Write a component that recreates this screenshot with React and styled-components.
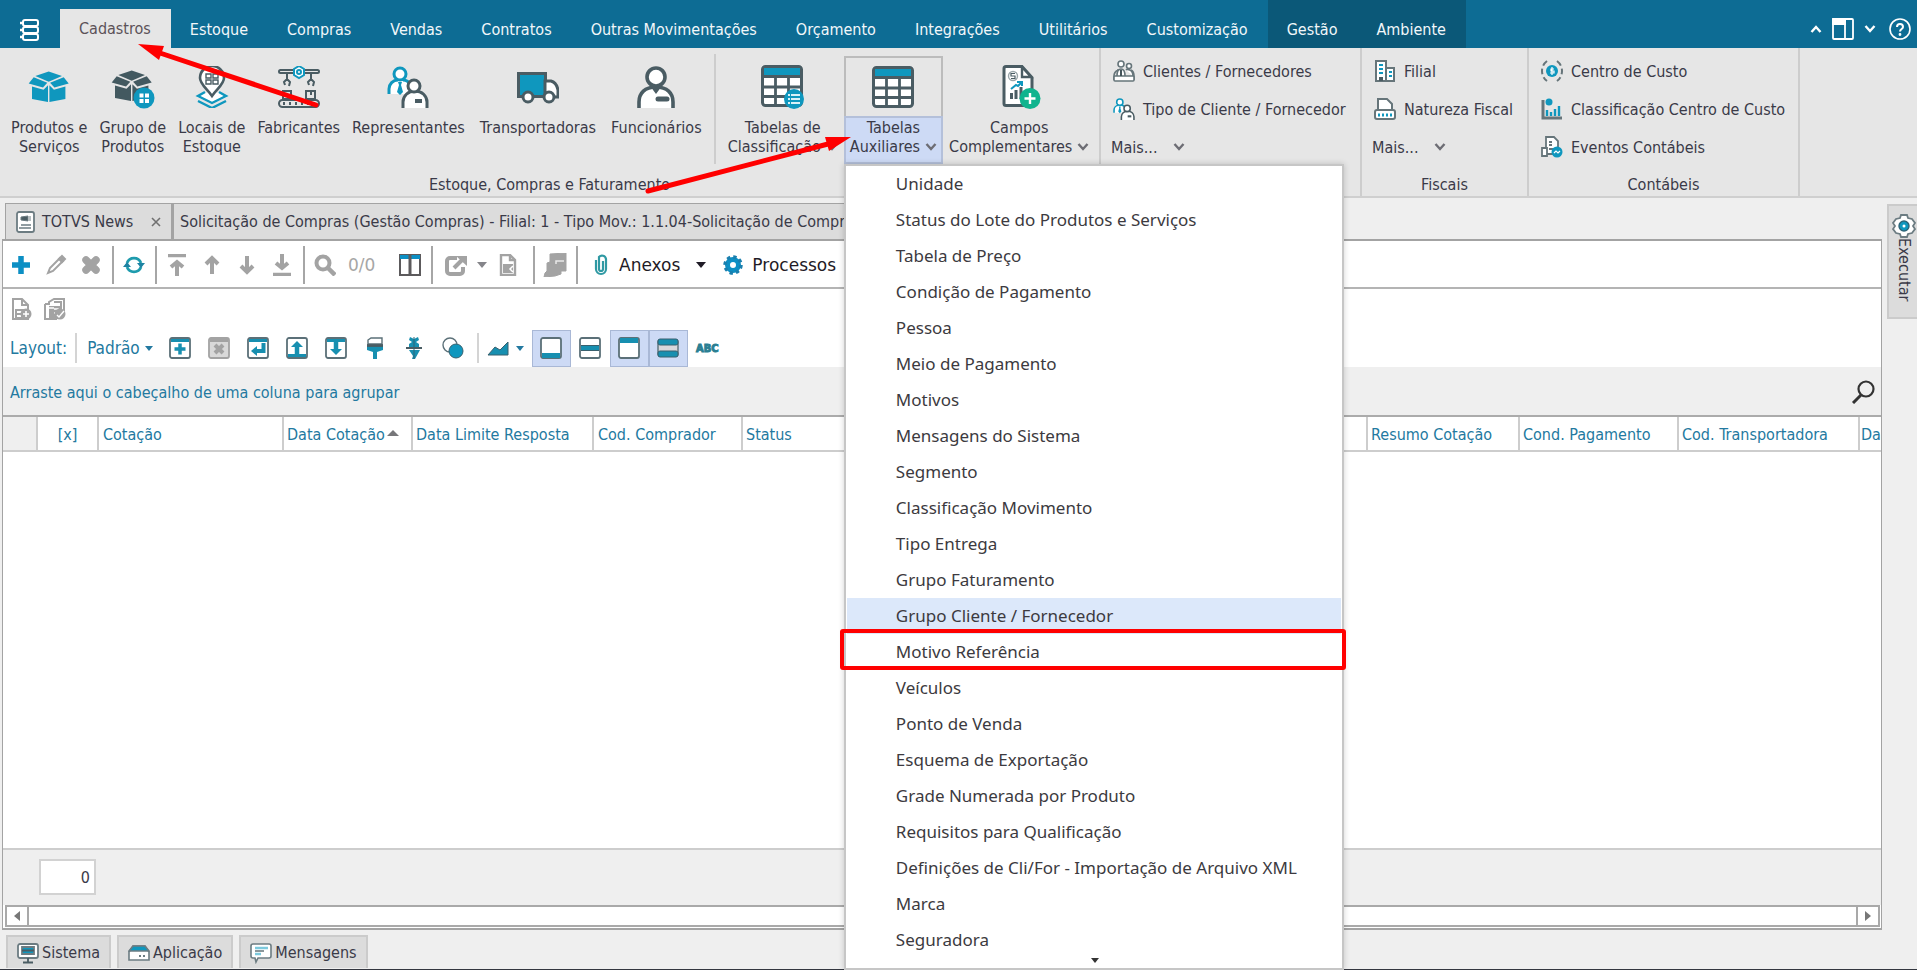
import React from 'react'
import styled, { createGlobalStyle, css } from 'styled-components'

const DARK = '#4a5c63'
const BLUE = '#0f97be'
const TEAL = '#178fb0'
const GREY = '#a3a3a3'

const GlobalStyle = createGlobalStyle`
  * { box-sizing: border-box; }

  body {
    margin: 0;
    overflow: hidden;
    background: #efefef;
    color: #3a3a48;
    font-family: 'DejaVu Sans Condensed', 'DejaVu Sans', sans-serif;
    font-size: 16px;
  }

  button, input, table {
    font: inherit;
    color: inherit;
  }

  button {
    margin: 0;
    padding: 0;
    border: 0;
    background: none;
    white-space: nowrap;
  }

  svg {
    display: block;
    flex: none;
  }
`

const Page = styled.div`
  position: relative;
  display: flex;
  flex-direction: column;
  height: 100vh;
  border-bottom: 1px solid #33363f;
`

/* ---------- header ---------- */

const Header = styled.header`
  display: flex;
  align-items: stretch;
  height: 48px;
  background: #0d6c94;
  color: #f2f7fa;
`

const AppButton = styled.button`
  display: flex;
  justify-content: center;
  align-items: center;
  width: 60px;
  padding-top: 12px;
`

const TabList = styled.nav`
  display: flex;
`

const MenuTab = styled.button`
  padding: 10px 20px 0 19px;
  ${({ $dark }) => $dark && css`
    background: #0b5878;
  `}
  ${({ $active }) => $active && css`
    margin-top: 9px;
    padding-top: 0;
    background: #e6e6e6;
    color: #5c5258;
  `}
`

const HeaderTools = styled.div`
  display: flex;
  align-items: center;
  gap: 6px;
  margin-left: auto;
  padding-top: 9px;
`

/* ---------- ribbon ---------- */

const Ribbon = styled.section`
  display: flex;
  height: 150px;
  background: #e6e6e6;
  border-bottom: 2px solid #cfcfcf;
`

const Group = styled.div`
  display: flex;
  flex-direction: column;
  width: ${({ $width }) => $width}px;
  border-right: 2px solid #cdcdcd;
`

const GroupBody = styled.div`
  display: flex;
  height: 116px;
  padding: 8px 0 0 5px;
`

const GroupLabel = styled.div`
  padding-top: 11px;
  line-height: 20px;
  text-align: center;
`

const Divider = styled.div`
  width: 2px;
  height: 110px;
  margin: -2px 6px 0;
  background: #cdcdcd;
`

const BigItem = styled.div`
  position: relative;
  margin-right: ${({ $after }) => $after || 0}px;
`

const BigButton = styled.button`
  display: block;
  height: 108px;
  ${({ $open }) => $open && css`
    box-shadow: inset 0 0 0 2px #bcbcbc;
  `}
`

const BigIcon = styled.span`
  display: flex;
  align-items: center;
  justify-content: center;
  height: 60px;
  padding-top: 2px;
`

const BigLabel = styled.span`
  display: block;
  height: 48px;
  padding: 2px 6px;
  line-height: 19px;
  text-align: center;
  ${({ $open }) => $open && css`
    background: #cddaf5;
    box-shadow: inset 0 0 0 2px #b4c0da;
  `}
`

const LabelLine = styled.span`
  display: flex;
  align-items: center;
  justify-content: center;
  gap: 5px;
`

const SmallList = styled.div`
  display: flex;
  flex: none;
  flex-direction: column;
  height: 116px;
  padding: 4px 0 0 10px;
`

const SmallButton = styled.button`
  display: flex;
  flex: none;
  align-items: center;
  gap: 8px;
  height: 38px;
  padding-left: 2px;
`

const MoreButton = styled(SmallButton)`
  gap: 16px;
  padding-left: 0;
`

/* ---------- drop-down menu ---------- */

const Menu = styled.div`
  position: absolute;
  z-index: 5;
  top: 108px;
  left: 0;
  width: 500px;
  height: 806px;
  padding: 0 1px;
  border: 2px solid #c6c6c6;
  background: #fff;
  box-shadow: 0 0 6px rgba(0, 0, 0, 0.18);
`

const MenuItem = styled.button`
  position: relative;
  display: block;
  width: 100%;
  height: 36px;
  padding-left: 49px;
  font-family: 'Noto Sans', sans-serif;
  font-size: 17px;
  line-height: 36px;
  text-align: left;
  color: #3c3a40;
  background: ${({ $hover }) => ($hover ? '#dce8fa' : 'none')};
  ${({ $marked }) => $marked && css`
    &::after {
      content: '';
      position: absolute;
      inset: -5px -5px 0 -7px;
      border: 4px solid #ff0000;
      border-radius: 3px;
    }
  `}
`

const MenuMore = styled.div`
  display: flex;
  justify-content: center;
  padding-left: 2px;
`

/* ---------- workspace ---------- */

const Workspace = styled.div`
  display: flex;
  flex: 1;
  gap: 5px;
  min-height: 0;
  padding: 5px 0 0 2px;
`

const Main = styled.main`
  display: flex;
  flex: 1;
  flex-direction: column;
  min-width: 0;
`

const DocTabs = styled.div`
  display: flex;
  height: 36px;
  padding-left: 3px;
`

const DocTab = styled.button`
  display: flex;
  align-items: center;
  width: ${({ $width }) => $width}px;
  padding: 0 10px 0 ${({ $pad }) => $pad}px;
  border: solid #a3a3a3;
  border-width: 1px 2px 0 1px;
  background: #dcdcdc;

  & > :last-child:not(:first-child) {
    margin-left: auto;
  }
`

const DocTitle = styled.span`
  margin-left: 6px;
`

const Panel = styled.section`
  display: flex;
  flex: 1;
  flex-direction: column;
  min-height: 0;
  border: solid #a3a3a3;
  border-width: 2px 1px 2px 1px;
  background: #fff;
`

const Toolbar = styled.div`
  display: flex;
  align-items: center;
  height: 48px;
  padding-top: 2px;
  border-bottom: 2px solid #b4b4b4;
  color: #1f1b26;
  font-family: 'DejaVu Sans', sans-serif;
  font-size: 17px;
`

const ActionBar = styled.div`
  display: flex;
  align-items: center;
  gap: 12px;
  height: 40px;
  padding-left: 7px;
`

const LayoutBar = styled.div`
  display: flex;
  align-items: center;
  height: 38px;
  padding-left: 7px;
  color: #2379a0;
  font-size: 17px;
`

const ToolButton = styled.button`
  display: flex;
  align-items: center;
  justify-content: center;
  width: ${({ $width }) => $width || 35}px;
  height: 38px;
`

const TextButton = styled.button`
  display: flex;
  align-items: center;
  gap: ${({ $gap }) => $gap || 10}px;
  padding-left: ${({ $left }) => $left || 0}px;
`

const Counter = styled.span`
  width: 50px;
  padding-left: 6px;
  color: #a6a6a6;
`

const Rule = styled.span`
  width: 2px;
  height: ${({ $light }) => ($light ? 30 : 38)}px;
  margin: 0 2px 0 4px;
  background: ${({ $light }) => ($light ? '#d4d4d4' : '#a6a6a6')};
`

const LayoutRule = styled(Rule)`
  margin: 0 10px 0 8px;
`

const Spacer = styled.span`
  width: 8px;
`

const LayoutTool = styled.button`
  display: flex;
  align-items: center;
  justify-content: center;
  width: 39px;
  height: 37px;
  ${({ $on }) => $on && css`
    border: 1px solid #a9b8d6;
    background: #cddaf5;
  `}
`

const GroupBar = styled.div`
  display: flex;
  align-items: center;
  justify-content: space-between;
  height: 50px;
  padding: 2px 6px 0 7px;
  background: #efefef;
  border-bottom: 2px solid #ababab;
  color: #2379a0;
`

const Grid = styled.table`
  width: 100%;
  border-collapse: collapse;
  table-layout: fixed;
  color: #2379a0;
`

const Th = styled.th`
  width: ${({ $width }) => ($width ? `${$width}px` : 'auto')};
  height: 34px;
  padding: 2px 0 0 ${({ $left }) => $left ?? 4}px;
  overflow: hidden;
  border-right: 2px solid #cdcdcd;
  border-bottom: 2px solid #cdcdcd;
  background: ${({ $blank }) => ($blank ? '#efefef' : '#fff')};
  font-weight: normal;
  text-align: ${({ $center }) => ($center ? 'center' : 'left')};
  white-space: nowrap;

  svg {
    display: inline-block;
    margin-left: 2px;
    vertical-align: 4px;
  }

  &:last-child {
    border-right: 0;
  }
`

const GridSpace = styled.div`
  flex: 1;
`

const GridFooter = styled.div`
  height: 57px;
  padding: 9px 0 0 36px;
  border-top: 2px solid #cdcdcd;
  background: #efefef;
`

const TotalBox = styled.input`
  display: block;
  width: 57px;
  height: 36px;
  padding: 0 4px 0 0;
  border: 2px solid #d2d2d2;
  background: #fff;
  text-align: right;
`

const ScrollBar = styled.div`
  display: flex;
  justify-content: space-between;
  height: 22px;
  margin: 0 1px 1px 2px;
  border: 2px solid #a9a9a9;
  background: #fff;
`

const ScrollButton = styled.button`
  display: flex;
  align-items: center;
  justify-content: center;
  width: 22px;
  border: solid #a9a9a9;
  border-width: ${({ $end }) => ($end ? '0 0 0 2px' : '0 2px 0 0')};
`

const SideTab = styled.button`
  display: flex;
  flex-direction: column;
  align-items: center;
  width: 30px;
  height: 115px;
  margin-top: 1px;
  padding: 8px 0 0 1px;
  border: 2px solid #cbcbcb;
  border-right: 0;
  background: #dcdcdc;

  span {
    writing-mode: vertical-rl;
    line-height: 22px;
  }
`

const StatusTabs = styled.footer`
  display: flex;
  gap: 6px;
  padding: 5px 0 1px 6px;
`

const StatusTab = styled.button`
  display: flex;
  align-items: center;
  gap: 3px;
  height: 33px;
  padding: 0 9px;
  border: 2px solid #cbcbcb;
  border-bottom: 0;
  background: #dcdcdc;
`

const Annotations = styled.svg`
  position: absolute;
  z-index: 10;
  top: 0;
  left: 0;
  pointer-events: none;
`

/* ---------- icons ---------- */

const Icon = ({ size = 22, box = 22, children, ...rest }) => (
  <svg width={size} height={size} viewBox={`0 0 ${box} ${box}`} fill='none' aria-hidden='true' {...rest}>
    {children}
  </svg>
)

const Chevron = ({ up, color = '#6d6d74' }) => (
  <svg width='12' height='8' viewBox='0 0 12 8' fill='none' stroke={color} strokeWidth='2.400' aria-hidden='true'>
    <path d={up ? 'M1.500 7L6 2l4.500 5' : 'M1.500 1L6 6l4.500-5'} />
  </svg>
)

const Caret = ({ color = '#1f1b26', size = 10 }) => (
  <svg width={size} height={size / 2 + 1} viewBox='0 0 10 6' fill={color} aria-hidden='true'>
    <path d='M0 0h10l-5 6z' />
  </svg>
)

const OpenBox = ({ color }) => (
  <g fill={color}>
    <path d='M20.700 5.500L34 10l-13.300 5.700L7.300 10z' />
    <path d='M5.700 11.300l13.600 5.400-4.300 4.800-14.300-4z' />
    <path d='M35.700 11.300l-13.600 5.400 4.300 4.800 14.300-4z' />
    <path d='M4 20.500l11.500 3.300 4.500-4.600V36L4 33z' />
    <path d='M37.400 20.500l-11.500 3.300-4.500-4.600V36l16-3z' />
  </g>
)

const ProductsIcon = () => <Icon size={42} box={42}><OpenBox color={BLUE} /></Icon>

const ProductGroupIcon = () => (
  <Icon size={44} box={44}>
    <OpenBox color='#435960' />
    <circle cx='33' cy='33' r='10.500' fill={BLUE} />
    <path d='M28.500 28.500h4v4h-4zM34 28.500h4v4h-4zM28.500 34h4v4h-4zM34 34h4v4h-4z' fill='#fff' />
  </Icon>
)

const StockPlaceIcon = () => (
  <Icon size={42} box={42}>
    <path d='M6 31l15-7 15 7-15 7z' fill='#fff' />
    <path d='M14 26l-7 4 14 7 14-7-7-4M7 35l14 7 14-7' stroke={BLUE} strokeWidth='2.400' />
    <path d='M21 30C16 23 9 18 9 12a12 12 0 0 1 24 0c0 6-7 11-12 18z' fill='#fff' stroke={DARK} strokeWidth='2.600' />
    <path d='M15 8h5v4h-5zM22 8h5v4h-5zM15 14h5v4h-5zM22 14h5v4h-5z' stroke={DARK} strokeWidth='1.400' />
  </Icon>
)

const FactoryIcon = () => (
  <Icon size={42} box={42} stroke={DARK} strokeWidth='2'>
    <rect x='1' y='4' width='40' height='3' rx='1.500' />
    <path d='M21 0l5 3v6l-5 3-5-3V3z' fill='#fff' stroke={BLUE} />
    <circle cx='21' cy='6' r='2' stroke={BLUE} />
    <path d='M9 7v6M33 7v6M7 19l-1-3 3-3 3 3-1 4M31 19l-1-3 3-3 3 3-1 4' />
    <path d='M5 25h8v8H5zM28 25h9v8h-9zM33 25v4' />
    <rect x='1' y='34' width='40' height='7' rx='3.500' />
    <path d='M5 37.500h2M11 37.500h2M17 37.500h2M23 37.500h2M29 37.500h2M35 37.500h2' strokeWidth='3' />
  </Icon>
)

const RepresentativesIcon = ({ size = 42 }) => (
  <Icon size={size} box={42} strokeWidth='3'>
    <path d='M2 28v-5c0-5 5-9 11-9s10 3 11 8v6z' fill='#fff' />
    <path d='M2 28v-5c0-5 4-9 9-9M16 14c3 0 6 2 7 5' stroke={BLUE} />
    <circle cx='13' cy='8' r='6' fill='#fff' stroke={BLUE} />
    <path d='M11 16h4l-1 3 2 7-3 3-3-3 2-7z' fill={BLUE} />
    <path d='M16 42v-6c0-6 5-11 12-11s12 5 12 11v6' fill='#fff' stroke={DARK} />
    <circle cx='27' cy='20' r='6' fill='#fff' stroke={DARK} />
    <path d='M28 35h7' stroke={DARK} strokeWidth='4' />
  </Icon>
)

const TruckIcon = () => (
  <Icon size={42} box={42}>
    <path d='M1.500 7.500h27v23h-27z' fill={BLUE} stroke={DARK} strokeWidth='3' />
    <path d='M28 15h6c4 1 6 4 7 9v7H28z' fill='#fff' stroke={DARK} strokeWidth='3' />
    <circle cx='11' cy='31' r='5' fill='#fff' stroke={DARK} strokeWidth='3' />
    <circle cx='32' cy='31' r='5' fill='#fff' stroke={DARK} strokeWidth='3' />
  </Icon>
)

const EmployeeIcon = () => (
  <Icon size={42} box={42} stroke={DARK} strokeWidth='3.600'>
    <path d='M4 42v-6c0-9 6-15 17-15s17 6 17 15v6' fill='#fff' />
    <circle cx='21' cy='11' r='9' fill='#fff' />
    <path d='M18 21l3 4 3-4' fill={DARK} />
    <path d='M23 33h9' strokeWidth='5' strokeLinecap='round' />
  </Icon>
)

const TableShape = () => (
  <>
    <rect x='1.500' y='1.500' width='39' height='39' rx='3' fill='#fff' stroke={DARK} strokeWidth='3' />
    <path d='M3 3h36v8H3z' fill={BLUE} />
    <path d='M2 11.500h38M2 22h38M2 31.500h38M14.500 12v28M27.500 12v28' stroke={DARK} strokeWidth='2.800' />
  </>
)

const TableIcon = () => <Icon size={42} box={42}><TableShape /></Icon>

const TableClassIcon = () => (
  <Icon size={44} box={44}>
    <TableShape />
    <circle cx='33' cy='34' r='10' fill={BLUE} />
    <path d='M27 30h2M27 34h2M27 38h2M30 30h9M30 34h9M30 38h9' stroke='#d8f1f8' strokeWidth='2' />
  </Icon>
)

const FieldsIcon = () => (
  <Icon size={44} box={44}>
    <path d='M9 1.500h16l10 11v28H9a2 2 0 0 1-2-2v-35a2 2 0 0 1 2-2z' fill='#fff' stroke={DARK} strokeWidth='3' />
    <path d='M25 2v10h9z' fill='#fff' stroke={DARK} strokeWidth='2.400' />
    <circle cx='16' cy='11' r='4.500' stroke='#9aa6aa' strokeWidth='1.400' />
    <path d='M18 8.500h-4v2.500h4v2.500h-4' stroke={DARK} strokeWidth='1.200' />
    <path d='M14 24l5-4 2 1 4-4M20 17h5v4' stroke={BLUE} strokeWidth='2' />
    <path d='M14.500 28v6M19 25v9M24 22v12' stroke={DARK} strokeWidth='3' />
    <circle cx='33' cy='33.500' r='10.500' fill='#0fb48e' />
    <path d='M33 28v11M27.500 33.500h11' stroke='#fff' strokeWidth='2.400' />
  </Icon>
)

const ClientsIcon = () => (
  <Icon stroke='#66757a' strokeWidth='1.600'>
    <path d='M1 20v-4c0-3 2-5 4-6v-1M21 20v-4c0-3-1-5-3-6' />
    <path d='M4 16c0-4 1-7 4-7s4 3 4 7M13 10c1-1 7-1 7 6' fill='#fff' />
    <circle cx='8' cy='4' r='3' fill='#fff' />
    <circle cx='16' cy='6' r='2.500' fill='#fff' />
    <rect x='1' y='16' width='20' height='5' rx='1' fill='#fff' />
    <path d='M8 10v6' stroke='#44545a' strokeWidth='2' />
  </Icon>
)

const BranchIcon = () => (
  <Icon stroke='#66757a' strokeWidth='2'>
    <path d='M2 1h10v20H2zM12 8h8v13h-8z' fill='#fff' />
    <path d='M5 5h4M5 9h4M5 13h4M15 12h3M15 16h3' stroke={BLUE} />
    <path d='M5 17h4v4H5z' fill={DARK} stroke='none' />
  </Icon>
)

const FiscalIcon = () => (
  <Icon stroke='#66757a' strokeWidth='2'>
    <path d='M4 12V1h9l5 5v6' fill='#fff' />
    <rect x='1' y='12' width='20' height='9' rx='2' fill='#fff' />
    <path d='M4 17h2M8 17h2M12 17h2M16 17h2' stroke={BLUE} strokeWidth='3' />
  </Icon>
)

const CostCenterIcon = () => (
  <Icon>
    <path d='M6 1C2 4 1 8 1 11s1 7 5 10M16 1c4 3 5 7 5 10s-1 7-5 10' stroke='#66757a' strokeWidth='2' strokeDasharray='6 3' />
    <circle cx='11' cy='11' r='6' fill={BLUE} />
    <path d='M13 9h-3v2h3v2H9M11 7v8' stroke='#fff' strokeWidth='1.200' />
  </Icon>
)

const CostClassIcon = () => (
  <Icon>
    <path d='M2 2v18h19' stroke='#66757a' strokeWidth='3' />
    <circle cx='8' cy='4' r='3.500' fill={BLUE} />
    <path d='M6 18v-6M10 18v-4M14 18V11M18 18V8' stroke={BLUE} strokeWidth='2.400' />
  </Icon>
)

const EventsIcon = () => (
  <Icon stroke='#66757a' strokeWidth='1.800'>
    <path d='M5 1h8l4 4v13H5z' fill='#fff' />
    <path d='M1 12h5v8H1z' fill='#fff' />
    <path d='M8 6h3M8 9h3M8 13h6' />
    <circle cx='16' cy='16' r='5.500' fill={BLUE} stroke='none' />
    <path d='M13 17l2-2 2 2 2-2' stroke='#fff' strokeWidth='1.200' />
  </Icon>
)

const StackIcon = () => (
  <Icon stroke='#fff' strokeWidth='2'>
    <rect x='4' y='1' width='15' height='6' rx='2' />
    <rect x='4' y='8' width='15' height='6' rx='2' />
    <rect x='4' y='15' width='15' height='6' rx='2' />
    <path d='M1 4h4M1 11h4M1 18h4' strokeWidth='2.400' />
  </Icon>
)

const PaneIcon = () => (
  <Icon stroke='#fff' strokeWidth='1.800'>
    <rect x='1' y='1' width='20' height='20' rx='1' />
    <path d='M13 1v20' />
    <path d='M1 1h12v5H1z' fill='#fff' />
  </Icon>
)

const HelpIcon = () => (
  <Icon stroke='#fff' strokeWidth='1.600'>
    <circle cx='11' cy='11' r='10' />
    <path d='M8 9c0-4 6-4 6 0 0 2-3 2-3 4.500' strokeWidth='2' />
    <circle cx='11' cy='16.500' r='.6' fill='#fff' />
  </Icon>
)

const NewsIcon = () => (
  <Icon stroke='#6c7c82' strokeWidth='1.800'>
    <rect x='3' y='1' width='17' height='20' rx='2' fill='#fff' />
    <path d='M7 6l7-1v5l-7-1zM16 5v5' fill={DARK} strokeWidth='1' />
    <path d='M7 14h10M5 17h12' strokeWidth='1.600' />
  </Icon>
)

const PlusIcon = () => <Icon><path d='M11 2v18M2 11h18' stroke='#0c8fc4' strokeWidth='5.500' /></Icon>

const PencilIcon = () => (
  <Icon stroke={GREY} strokeWidth='2'>
    <path d='M3 19l2-5L15 4l3 3L8 17z' />
    <path d='M14 5l3-3 3 3-3 3z' fill={GREY} />
  </Icon>
)

const CrossIcon = () => (
  <Icon>
    <path d='M6 6l10 10M16 6L6 16' stroke={GREY} strokeWidth='7.500' strokeLinecap='round' />
  </Icon>
)

const RefreshIcon = () => (
  <Icon stroke='#1e9bad' strokeWidth='2.800'>
    <path d='M4 9a7.500 7.500 0 0 1 14 0M18 13a7.500 7.500 0 0 1-14 0' />
    <path d='M14 9h8l-4 5zM8 13H0l4-5z' fill='#1d82a2' stroke='none' />
  </Icon>
)

const ArrowIcon = ({ down, bar }) => (
  <Icon stroke={GREY} strokeWidth='4'>
    <g transform={down ? 'rotate(180 11 11)' : undefined}>
      {bar && <path d='M2 1.500h18' strokeWidth='3.500' />}
      <path d={bar ? 'M11 22V9M5 13l6-5 6 5' : 'M11 20V5M5 10l6-6 6 6'} />
    </g>
  </Icon>
)

const FindIcon = () => (
  <Icon stroke={GREY}>
    <circle cx='9' cy='9' r='6.500' strokeWidth='4' />
    <path d='M14 14l7 7' strokeWidth='4.500' />
  </Icon>
)

const ColumnsIcon = () => (
  <Icon stroke='#5c5a5c' strokeWidth='2'>
    <path d='M1 1h20v20H1z' />
    <path d='M1 3h20' stroke='#0c8fc4' strokeWidth='4' />
    <path d='M11 1v20' strokeWidth='3' />
  </Icon>
)

const ExportIcon = () => (
  <Icon stroke={GREY}>
    <path d='M12 4H5a3 3 0 0 0-3 3v10a3 3 0 0 0 3 3h10a3 3 0 0 0 3-3v-4' strokeWidth='4' />
    <path d='M9 14l9-9' strokeWidth='4' />
    <path d='M11 2h11v10z' fill={GREY} stroke='none' />
  </Icon>
)

const ReportIcon = () => (
  <Icon stroke={GREY} strokeWidth='2.400'>
    <path d='M4 1h9l5 5v15H4z' />
    <path d='M6 10h10v9H6z' fill={GREY} stroke='none' />
    <path d='M16 12l-3 3 3 3' stroke='#fff' strokeWidth='1.500' />
    <path d='M13 1v5h5' />
  </Icon>
)

const StampIcon = () => (
  <Icon size={24} box={24}>
    <path d='M7 1l16-1v18h-5v3l-6 2-11 1 1-4 2-2V10l3-1z' fill={GREY} stroke={GREY} />
    <path d='M13 11V8h8' stroke='#e9e9e9' strokeWidth='1.500' />
  </Icon>
)

const ClipIcon = () => (
  <Icon stroke='#2f99a3' strokeWidth='2.200'>
    <path d='M6 6v9a5 5 0 0 0 10 0V5a4 4 0 0 0-7-2v12a2 2 0 0 0 4 0V7' />
  </Icon>
)

const GearIcon = () => (
  <Icon>
    <circle cx='11' cy='11' r='5.500' stroke='#0c8fc4' strokeWidth='5' />
    <circle cx='11' cy='11' r='8' stroke='#1a7fae' strokeWidth='3.500' strokeDasharray='3.280 3' />
  </Icon>
)

const RunGearIcon = () => (
  <Icon size={24} box={24}>
    <path d='M9 1h6l1 3 4 1 3 4-2 3 2 3-3 4-4 1-1 3H9l-1-3-4-1-3-4 2-3-2-3 3-4 4-1z' fill='#fff' stroke='#6c7c82' strokeWidth='1.800' />
    <circle cx='12' cy='12' r='5' fill={BLUE} stroke='#2c6478' strokeWidth='1.400' />
    <circle cx='12' cy='12' r='1.500' fill='#fff' />
  </Icon>
)

const AddRecordIcon = () => (
  <Icon stroke={GREY} strokeWidth='2'>
    <path d='M3 1h9l6 6v14H3zM12 1v6h6' />
    <path d='M6 12h7v8H6z' fill={GREY} />
    <path d='M7 14h5M7 18h4' stroke='#fff' />
    <circle cx='16' cy='16' r='5.500' fill={GREY} stroke='none' />
    <path d='M16 13v6M13 16h6' stroke='#fff' strokeWidth='1.600' />
  </Icon>
)

const RecordsIcon = () => (
  <Icon stroke={GREY} strokeWidth='2'>
    <path d='M1 6h4V4l5-3h10v13M1 6v15h12M10 4h7v8' />
    <path d='M6 9h9v11H6z' fill={GREY} />
    <path d='M4 10h6M10 11h4v4h-4' stroke='#fff' strokeWidth='1.400' />
    <circle cx='16' cy='16' r='5.500' fill={GREY} stroke='none' />
    <path d='M13 17l2 2 5-6' stroke='#fff' strokeWidth='1.400' />
  </Icon>
)

const FrameIcon = ({ color = '#5b7078', fill = '#fff', top, bottom, children }) => (
  <Icon>
    <rect x='1' y='1' width='20' height='20' rx='2' fill={fill} stroke={color} strokeWidth='1.800' />
    {top && <path d='M2 3.500h18' stroke={color === GREY ? GREY : TEAL} strokeWidth={top} />}
    {bottom && <path d='M2 18.500h18' stroke={TEAL} strokeWidth={bottom} />}
    {children}
  </Icon>
)

const LayoutIcon = ({ name }) => {
  switch (name) {
    case 'new':
      return <FrameIcon top='3'><path d='M11 6.500v11M5.500 12h11' stroke={TEAL} strokeWidth='3.500' /></FrameIcon>
    case 'delete':
      return <FrameIcon top='3' color={GREY} fill='#d9d9d9'><path d='M7 8l8 8M15 8l-8 8' stroke={GREY} strokeWidth='4' /></FrameIcon>
    case 'restore':
      return <FrameIcon top='3'><path d='M16.500 6v8H10' stroke={TEAL} strokeWidth='4' /><path d='M10 9v10l-6-5z' fill={TEAL} /></FrameIcon>
    case 'export':
      return <FrameIcon bottom='3'><path d='M11 17V8' stroke={TEAL} strokeWidth='4.500' /><path d='M5 10h12l-6-6z' fill={TEAL} /></FrameIcon>
    case 'import':
      return <FrameIcon top='3'><path d='M11 5v9' stroke={TEAL} strokeWidth='4.500' /><path d='M5 12h12l-6 6z' fill={TEAL} /></FrameIcon>
    case 'brush':
      return (
        <Icon>
          <path d='M4 7V3l3-2h11v6z' fill='#fff' stroke='#5b7078' strokeWidth='1.400' />
          <path d='M3 8h16v5l-6 2v7H9v-7l-6-2z' fill={TEAL} />
          <path d='M3 8.500h16' stroke='#4a5c63' strokeWidth='2.800' />
        </Icon>
      )
    case 'sort':
      return (
        <Icon>
          <path d='M7 0l4 2 4-2 1 3-3 2 3 2v3H6V7l3-2-3-2zM6 13h11l-5 9H9l1-3z' fill={TEAL} />
          <path d='M3 11h16' stroke='#4a5c63' strokeWidth='2' />
          <path d='M11 0v22' stroke='#2c6478' strokeWidth='1' />
        </Icon>
      )
    case 'circles':
      return (
        <Icon>
          <circle cx='8' cy='8' r='7' fill='#fff' stroke='#5b7078' strokeWidth='1.400' />
          <circle cx='14' cy='14' r='7' fill={BLUE} stroke='#38606e' strokeWidth='1' />
        </Icon>
      )
    case 'chart':
      return <Icon><path d='M1 18l7-8 5 3 8-8v13z' fill={TEAL} stroke='#38606e' /></Icon>
    case 'footer':
      return <FrameIcon bottom='5' />
    case 'row':
      return <FrameIcon><path d='M2 11h18' stroke={TEAL} strokeWidth='4' /><path d='M2 8.500h18M2 13.500h18' stroke='#38606e' /></FrameIcon>
    case 'header':
      return <FrameIcon top='5' />
    case 'rows':
      return (
        <Icon>
          <rect x='1' y='3' width='20' height='16' rx='2' fill='#d8d8dc' stroke='#5b7078' strokeWidth='1.400' />
          <rect x='1' y='2' width='20' height='6' rx='2' fill={TEAL} stroke='#38606e' />
          <rect x='1' y='14' width='20' height='6' rx='2' fill={TEAL} stroke='#38606e' />
        </Icon>
      )
    default:
      return null
  }
}

const Abc = styled.span`
  color: #2a7f93;
  font-size: 11px;
  font-weight: 700;
  -webkit-text-stroke: 1px #2a7f93;
`

const GridSearchIcon = () => (
  <Icon size={24} box={24} stroke='#333'>
    <circle cx='15' cy='9' r='7.500' strokeWidth='2.200' />
    <path d='M10 15l-8 8' strokeWidth='3' />
  </Icon>
)

const MonitorIcon = () => (
  <Icon stroke='#6c7c82' strokeWidth='1.800'>
    <rect x='1' y='2' width='20' height='14' rx='2' fill='#fff' />
    <path d='M5 5h12v7H5z' fill={BLUE} />
    <path d='M5 8.500h12M11 16v4M6 20.500h10' stroke={DARK} />
  </Icon>
)

const ServerIcon = () => (
  <Icon stroke='#6c7c82' strokeWidth='1.600'>
    <path d='M5 4h12l4 6v8H1v-8z' fill='#fff' />
    <path d='M5 4h12l4 5H1z' fill={BLUE} />
    <path d='M11 14h2M15 14h2' strokeWidth='2' />
  </Icon>
)

const MessageIcon = () => (
  <Icon stroke='#6c7c82' strokeWidth='1.600'>
    <path d='M3 2h16a2 2 0 0 1 2 2v10a2 2 0 0 1-2 2H8l-2 4-1-4H3a2 2 0 0 1-2-2V4a2 2 0 0 1 2-2z' fill='#fff' />
    <path d='M5 6h13M5 12h6' stroke='#7cc9dd' strokeWidth='2.400' />
    <path d='M5 9h9' stroke='#8a979b' strokeWidth='2' />
  </Icon>
)

/* ---------- data ---------- */

const menuTabs = [
  'Cadastros', 'Estoque', 'Compras', 'Vendas', 'Contratos', 'Outras Movimentações',
  'Orçamento', 'Integrações', 'Utilitários', 'Customização', 'Gestão', 'Ambiente'
]

const bigButtons = [
  { lines: ['Produtos e', 'Serviços'], icon: ProductsIcon },
  { lines: ['Grupo de', 'Produtos'], icon: ProductGroupIcon },
  { lines: ['Locais de', 'Estoque'], icon: StockPlaceIcon },
  { lines: ['Fabricantes'], icon: FactoryIcon },
  { lines: ['Representantes'], icon: RepresentativesIcon, after: 3 },
  { lines: ['Transportadoras'], icon: TruckIcon, after: 3 },
  { lines: ['Funcionários'], icon: EmployeeIcon }
]

const tableButtons = [
  { lines: ['Tabelas de', 'Classificação'], icon: TableClassIcon },
  { lines: ['Tabelas', 'Auxiliares'], icon: TableIcon, open: true },
  { lines: ['Campos', 'Complementares'], icon: FieldsIcon }
]

const menuItems = [
  'Unidade', 'Status do Lote do Produtos e Serviços', 'Tabela de Preço', 'Condição de Pagamento',
  'Pessoa', 'Meio de Pagamento', 'Motivos', 'Mensagens do Sistema', 'Segmento',
  'Classificação Movimento', 'Tipo Entrega', 'Grupo Faturamento', 'Grupo Cliente / Fornecedor',
  'Motivo Referência', 'Veículos', 'Ponto de Venda', 'Esquema de Exportação',
  'Grade Numerada por Produto', 'Requisitos para Qualificação',
  'Definições de Cli/For - Importação de Arquivo XML', 'Marca', 'Seguradora'
]

const smallGroups = [
  {
    width: 261,
    more: true,
    items: [
      ['Clientes / Fornecedores', ClientsIcon],
      ['Tipo de Cliente / Fornecedor', () => <RepresentativesIcon size={22} />]
    ]
  },
  {
    width: 167,
    label: 'Fiscais',
    more: true,
    items: [['Filial', BranchIcon], ['Natureza Fiscal', FiscalIcon]]
  },
  {
    width: 271,
    label: 'Contábeis',
    items: [
      ['Centro de Custo', CostCenterIcon],
      ['Classificação Centro de Custo', CostClassIcon],
      ['Eventos Contábeis', EventsIcon]
    ]
  }
]

const layoutTools = ['new', 'delete', 'restore', 'export', 'import', 'brush', 'sort', 'circles']
const viewTools = ['footer', 'row', 'header', 'rows']

/* ---------- components ---------- */

const AuxiliaryMenu = () => (
  <Menu role='menu'>
    {menuItems.map((item) => (
      <MenuItem
        key={item}
        role='menuitem'
        $hover={item === 'Grupo Cliente / Fornecedor'}
        $marked={item === 'Motivo Referência'}
      >
        {item}
      </MenuItem>
    ))}
    <MenuMore><Caret size={8} color='#333' /></MenuMore>
  </Menu>
)

const RibbonButton = ({ lines, icon: Glyph, arrow, open, after }) => (
  <BigItem $after={after}>
    <BigButton $open={open} aria-expanded={open}>
      <BigIcon><Glyph /></BigIcon>
      <BigLabel $open={open}>
        {lines.map((line, i) => (
          <LabelLine key={line}>
            {line}
            {arrow && i === lines.length - 1 && <Chevron />}
          </LabelLine>
        ))}
      </BigLabel>
    </BigButton>
    {open && <AuxiliaryMenu />}
  </BigItem>
)

const RibbonBar = () => (
  <Ribbon>
    <Group $width={1101}>
      <GroupBody>
        {bigButtons.map((b) => <RibbonButton key={b.lines[0]} {...b} />)}
        <Divider />
        {tableButtons.map((b) => <RibbonButton key={b.lines[0]} {...b} arrow />)}
      </GroupBody>
      <GroupLabel>Estoque, Compras e Faturamento</GroupLabel>
    </Group>
    {smallGroups.map(({ width, label, more, items }) => (
      <Group key={width} $width={width}>
        <SmallList>
          {items.map(([text, Glyph]) => (
            <SmallButton key={text}><Glyph />{text}</SmallButton>
          ))}
          {more && <MoreButton>Mais... <Chevron /></MoreButton>}
        </SmallList>
        {label && <GroupLabel>{label}</GroupLabel>}
      </Group>
    ))}
  </Ribbon>
)

const MainToolbar = () => (
  <Toolbar>
    <ToolButton aria-label='Incluir'><PlusIcon /></ToolButton>
    <ToolButton aria-label='Editar'><PencilIcon /></ToolButton>
    <ToolButton aria-label='Excluir'><CrossIcon /></ToolButton>
    <Rule />
    <ToolButton aria-label='Atualizar'><RefreshIcon /></ToolButton>
    <Rule />
    <ToolButton aria-label='Primeiro'><ArrowIcon bar /></ToolButton>
    <ToolButton aria-label='Anterior'><ArrowIcon /></ToolButton>
    <ToolButton aria-label='Próximo'><ArrowIcon down /></ToolButton>
    <ToolButton aria-label='Último'><ArrowIcon down bar /></ToolButton>
    <Rule />
    <ToolButton aria-label='Localizar'><FindIcon /></ToolButton>
    <Counter>0/0</Counter>
    <ToolButton aria-label='Colunas'><ColumnsIcon /></ToolButton>
    <Rule />
    <ToolButton $width={42} aria-label='Exportar'><ExportIcon /></ToolButton>
    <Caret color='#85858a' />
    <ToolButton $width={42} aria-label='Relatório'><ReportIcon /></ToolButton>
    <Rule />
    <ToolButton aria-label='Carimbo'><StampIcon /></ToolButton>
    <Rule />
    <TextButton $left={10} $gap={7}><ClipIcon />Anexos</TextButton>
    <ToolButton $width={42} aria-label='Mais anexos'><Caret /></ToolButton>
    <TextButton $gap={8}><GearIcon />Processos</TextButton>
  </Toolbar>
)

const LayoutToolbar = () => (
  <LayoutBar>
    Layout:
    <LayoutRule $light />
    <TextButton $gap={5}>Padrão <Caret color='#2379a0' size={8} /></TextButton>
    <Spacer />
    {layoutTools.map((name) => (
      <LayoutTool key={name} aria-label={name}><LayoutIcon name={name} /></LayoutTool>
    ))}
    <Rule $light />
    <ToolButton aria-label='chart'><LayoutIcon name='chart' /></ToolButton>
    <Caret color='#2379a0' size={8} />
    <Spacer />
    {viewTools.map((name) => (
      <LayoutTool key={name} $on={name !== 'row'} aria-label={name}><LayoutIcon name={name} /></LayoutTool>
    ))}
    <LayoutTool aria-label='Ortografia'><Abc>ABC</Abc></LayoutTool>
  </LayoutBar>
)

const DataGrid = () => (
  <Grid>
    <thead>
      <tr>
        <Th $width={34} $blank />
        <Th $width={61} $left={0} $center>[x]</Th>
        <Th $width={185}>Cotação</Th>
        <Th $width={129} $left={3}>
          Data Cotação
          <svg width='12' height='6' viewBox='0 0 12 6' fill='#77777a' aria-hidden='true'>
            <path d='M0 6h12L6 0z' />
          </svg>
        </Th>
        <Th $width={181} $left={3}>Data Limite Resposta</Th>
        <Th $width={149}>Cod. Comprador</Th>
        <Th $left={3}>Status</Th>
        <Th $width={152} $left={3}>Resumo Cotação</Th>
        <Th $width={159} $left={3}>Cond. Pagamento</Th>
        <Th $width={181} $left={3}>Cod. Transportadora</Th>
        <Th $width={22} $left={1}>Da</Th>
      </tr>
    </thead>
  </Grid>
)

const App = () => (
  <>
    <GlobalStyle />
    <Page>
      <Header>
        <AppButton aria-label='Menu'><StackIcon /></AppButton>
        <TabList>
          {menuTabs.map((tab, i) => (
            <MenuTab key={tab} $active={i === 0} $dark={i > 9}>{tab}</MenuTab>
          ))}
        </TabList>
        <HeaderTools>
          <button aria-label='Recolher'><Chevron up color='#fff' /></button>
          <ToolButton $width={30} aria-label='Painéis'><PaneIcon /></ToolButton>
          <button aria-label='Opções'><Chevron color='#fff' /></button>
          <ToolButton aria-label='Ajuda'><HelpIcon /></ToolButton>
        </HeaderTools>
      </Header>
      <RibbonBar />
      <Workspace>
        <Main>
          <DocTabs>
            <DocTab $width={168} $pad={8}>
              <NewsIcon />
              <DocTitle>TOTVS News</DocTitle>
              <svg width='10' height='10' viewBox='0 0 10 10' stroke='#707070' strokeWidth='1.600' aria-hidden='true'>
                <path d='M1 1l8 8M9 1L1 9' />
              </svg>
            </DocTab>
            <DocTab $width={900} $pad={6}>
              Solicitação de Compras (Gestão Compras) - Filial: 1 - Tipo Mov.: 1.1.04-Solicitação de Compras
            </DocTab>
          </DocTabs>
          <Panel>
            <MainToolbar />
            <ActionBar>
              <button aria-label='Novo registro'><AddRecordIcon /></button>
              <button aria-label='Registros'><RecordsIcon /></button>
            </ActionBar>
            <LayoutToolbar />
            <GroupBar>
              Arraste aqui o cabeçalho de uma coluna para agrupar
              <button aria-label='Pesquisar'><GridSearchIcon /></button>
            </GroupBar>
            <DataGrid />
            <GridSpace />
            <GridFooter>
              <TotalBox aria-label='Total' defaultValue='0' readOnly />
            </GridFooter>
            <ScrollBar>
              <ScrollButton aria-label='Rolar à esquerda'>
                <svg width='6' height='10' fill='#777' aria-hidden='true'><path d='M6 0v10L0 5z' /></svg>
              </ScrollButton>
              <ScrollButton $end aria-label='Rolar à direita'>
                <svg width='6' height='10' fill='#777' aria-hidden='true'><path d='M0 0v10l6-5z' /></svg>
              </ScrollButton>
            </ScrollBar>
          </Panel>
        </Main>
        <SideTab><RunGearIcon /><span>Executar</span></SideTab>
      </Workspace>
      <StatusTabs>
        <StatusTab><MonitorIcon />Sistema</StatusTab>
        <StatusTab><ServerIcon />Aplicação</StatusTab>
        <StatusTab><MessageIcon />Mensagens</StatusTab>
      </StatusTabs>
      <Annotations width='900' height='220' aria-hidden='true'>
        <g stroke='#ff0000' strokeWidth='5' strokeLinecap='round' fill='#ff0000'>
          <path d='M316 105L160 53M648 191l180-47' />
          <path stroke='none' d='M138 44l26 2-5 14zM851 137l-26 0 4 14z' />
        </g>
      </Annotations>
    </Page>
  </>
)

export default App
